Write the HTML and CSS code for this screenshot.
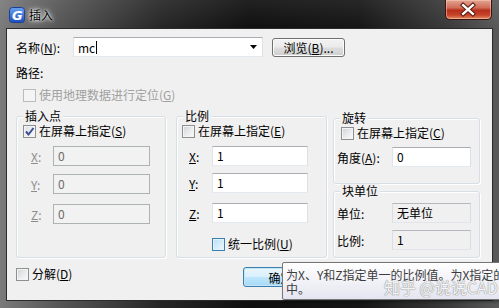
FILE: index.html
```html
<!DOCTYPE html>
<html lang="zh-CN">
  <head>
    <meta charset="UTF-8" />
    <title>插入</title>
    <link rel="stylesheet" href="styles.css">
  </head>
  <body>
    <div class="window">
      <div class="titlebar">
        <svg class="app-icon" viewBox="0 0 16 16">
          <defs>
            <linearGradient id="ig" x1="0" y1="0" x2="0" y2="1">
              <stop offset="0" stop-color="#6aa0f0" />
              <stop offset="1" stop-color="#1d4fc0" />
            </linearGradient>
          </defs>
          <rect x="0.5" y="0.5" width="15" height="15" rx="3" fill="url(#ig)" stroke="#1a3f95" />
          <text x="8.3" y="13" text-anchor="middle" class="icon-g">G</text>
        </svg>
        <span class="title">插入</span>
        <div class="close">
          <svg viewBox="0 0 47 20" width="47" height="20">
            <path d="M18.5 6 L28.5 15 M28.5 6 L18.5 15" stroke="#5a1a10" stroke-width="4.5" stroke-linecap="square" />
            <path d="M18.5 6 L28.5 15 M28.5 6 L18.5 15" stroke="#fff" stroke-width="2.4" stroke-linecap="square" />
          </svg>
        </div>
      </div>

      <div class="client">
        <div class="name-row">
          <span class="name-lbl">名称(<u>N</u>):</span>
          <div class="combo">
            <span>mc</span><span class="caret"></span>
            <svg class="drop" viewBox="0 0 7 4" width="7" height="4"><path d="M0 0 H7 L3.5 4 Z" fill="#000" /></svg>
          </div>
          <button class="btn browse">浏览(<u>B</u>)...</button>
        </div>

        <div class="path-lbl">路径:</div>
        <div class="check geo"><span class="box off"></span>使用地理数据进行定位(<u>G</u>)</div>

        <div class="groups">
          <div class="group insert">
            <div class="gtitle">插入点</div>
            <div class="check"><span class="box on">
              <svg viewBox="0 0 11 11" width="11" height="11"><path d="M2 5.5 L4.5 8.5 L9.5 2" fill="none" stroke="#3b4f91" stroke-width="2" /></svg>
            </span>在屏幕上指定(<u>S</u>)</div>
            <div class="field dim first"><span class="flbl"><u>X</u>:</span><div class="input off">0</div></div>
            <div class="field dim second"><span class="flbl"><u>Y</u>:</span><div class="input off">0</div></div>
            <div class="field dim third"><span class="flbl"><u>Z</u>:</span><div class="input off">0</div></div>
          </div>

          <div class="group scale">
            <div class="gtitle">比例</div>
            <div class="check"><span class="box"></span>在屏幕上指定(<u>E</u>)</div>
            <div class="field first"><span class="flbl"><u>X</u>:</span><div class="input">1</div></div>
            <div class="field second"><span class="flbl"><u>Y</u>:</span><div class="input">1</div></div>
            <div class="field third"><span class="flbl"><u>Z</u>:</span><div class="input">1</div></div>
            <div class="check uniform"><span class="box hot"></span>统一比例(<u>U</u>)</div>
          </div>

          <div class="col3">
            <div class="group rot">
              <div class="gtitle">旋转</div>
              <div class="check"><span class="box"></span>在屏幕上指定(<u>C</u>)</div>
              <div class="field"><span class="flbl">角度(<u>A</u>):</span><div class="input">0</div></div>
            </div>
            <div class="group unit">
              <div class="gtitle">块单位</div>
              <div class="field"><span class="flbl">单位:</span><div class="input ro">无单位</div></div>
              <div class="field"><span class="flbl">比例:</span><div class="input ro">1</div></div>
            </div>
          </div>
        </div>

        <div class="footer">
          <div class="check explode"><span class="box"></span>分解(<u>D</u>)</div>
          <div class="buttons">
            <button class="btn default">确定</button>
            <button class="btn">取消</button>
            <button class="btn">帮助(<u>H</u>)</button>
          </div>
        </div>
      </div>
    </div>

    <div class="tooltip">为X、Y和Z指定单一的比例值。为X指定的值也反映在Y和Z的值<br>中。</div>
    <div class="watermark">知乎 @说说CAD</div>
  </body>
</html>
```

FILE: styles.css
```css
* {
  margin: 0;
  padding: 0;
  box-sizing: border-box;
}

body {
  width: 499px;
  height: 308px;
  overflow: hidden;
  position: relative;
  background: #111;
  font-family: "Noto Sans CJK SC", "Liberation Sans", sans-serif;
  font-size: 12px;
  color: #000;
}

u {
  text-decoration: underline;
  text-underline-offset: 1px;
}

/* window frame */
.window {
  width: 499px;
  height: 308px;
  padding: 0 7px 8px;
  display: flex;
  flex-direction: column;
  background:
    linear-gradient(180deg, rgba(255, 255, 255, 0.08) 0, rgba(0, 0, 0, 0) 30px),
    linear-gradient(90deg, #7a7a7a 0%, #555 12%, #262626 32%, #0f0f0f 50%, #151515 72%, #3a3a3a 90%, #5a5a5a 100%);
}

.titlebar {
  height: 29px;
  display: flex;
  align-items: flex-start;
  flex-shrink: 0;
}

.app-icon {
  width: 16px;
  height: 16px;
  margin: 7px 0 0 2px;
}

.icon-g {
  font-family: "DejaVu Sans", sans-serif;
  font-weight: bold;
  font-style: italic;
  font-size: 13px;
  fill: #fff;
}

.title {
  margin: 7px 0 0 4px;
  line-height: 16px;
  color: #000;
  text-shadow: 0 0 4px #fff, 0 0 6px #ddd, 0 0 2px #fff;
}

.close {
  margin-left: auto;
  width: 47px;
  height: 20px;
  border: 1px solid #3a1410;
  border-top: none;
  border-radius: 0 0 5px 5px;
  background: linear-gradient(180deg, #e3a592 0%, #d06d57 40%, #b7301b 55%, #c8452b 80%, #e08d63 100%);
  box-shadow: inset 0 0 0 1px rgba(255, 210, 190, 0.5);
  display: flex;
}

.close svg {
  margin: -1px 0 0 -1px;
}

/* client area */
.client {
  flex: 1;
  background: #f0f0f0;
  padding: 8px 12px 0 9px;
  box-shadow: 0 0 0 1px #2b2b2b;
}

.name-row {
  display: flex;
  align-items: center;
  height: 20px;
}

.name-lbl {
  width: 57px;
}

.combo {
  width: 190px;
  height: 20px;
  display: flex;
  align-items: center;
  padding-left: 4px;
  background: #fff;
  border: 1px solid;
  border-color: #abadb3 #dbdfe6 #e3e9ef #e2e3ea;
}

.caret {
  width: 1px;
  height: 13px;
  margin-left: 1px;
  background: #000;
}

.drop {
  margin: 0 5px 0 auto;
}

.btn {
  font: inherit;
  color: #000;
  height: 20px;
  width: 75px;
  border: 1px solid #707070;
  border-radius: 3px;
  background: linear-gradient(180deg, #f2f2f2 0%, #ebebeb 48%, #dddddd 52%, #cfcfcf 100%);
  box-shadow: inset 0 0 0 1px #fcfcfc;
}

.browse {
  margin-left: 9px;
  width: 73px;
  height: 19px;
}

.default {
  border-color: #3c7fb1;
  background: linear-gradient(180deg, #eaf6fd 0%, #d9f0fc 48%, #bee6fd 52%, #a7d9f5 100%);
  box-shadow: inset 0 0 0 1px #c4e5f6;
}

.path-lbl {
  margin-top: 8px;
  line-height: 16px;
}

/* checkboxes */
.check {
  display: flex;
  align-items: center;
  height: 16px;
  line-height: 16px;
  white-space: nowrap;
}

.box {
  width: 13px;
  height: 13px;
  margin-right: 3px;
  flex-shrink: 0;
  border: 1px solid #8e8f8f;
  background: linear-gradient(135deg, #cfd2d7 0%, #eceef0 60%, #fafafa 100%);
  box-shadow: inset 0 0 0 1px #f4f4f4;
  display: flex;
  align-items: center;
  justify-content: center;
}

.box.off {
  border-color: #bcbcbc;
  background: #f4f4f4;
}

.box.on {
  background: linear-gradient(135deg, #dfe3e8 0%, #f6f7f8 100%);
}

.box.hot {
  border-color: #3c7fb1;
  background: linear-gradient(135deg, #b9def5 0%, #def1fb 70%, #eef8fd 100%);
  box-shadow: inset 0 0 0 1px #def3fd;
}

.geo {
  margin: 6px 0 0 7px;
  color: #a0a0a0;
}

/* group boxes */
.groups {
  display: flex;
  height: 142px;
  margin-top: 13px;
}

.group {
  border: 1px solid #d5dfe5;
  border-radius: 3px;
  box-shadow: inset 1px 1px 0 #fff, 1px 1px 0 #fff;
}

.gtitle {
  width: max-content;
  height: 14px;
  line-height: 14px;
  margin: -8px 0 0 6px;
  padding: 0 2px;
  background: #f0f0f0;
}

.field {
  display: flex;
  align-items: center;
}

.flbl {
  white-space: nowrap;
}

.input {
  height: 20px;
  padding-left: 4px;
  line-height: 18px;
  background: #fff;
  border: 1px solid;
  border-color: #abadb3 #dbdfe6 #e3e9ef #e2e3ea;
}

.input.off {
  background: #f2f2f2;
  color: #6d6d6d;
  border-color: #adb2b5;
}

.input.ro {
  background: #f0f0f0;
  border-color: #b5b9bd #dadde1 #e2e5e9 #dadde1;
}

.dim .flbl {
  color: #8d8d8d;
}

.insert {
  width: 150px;
  margin-right: 10px;
}

.insert .check {
  margin-left: 6px;
}

.insert .field {
  padding-left: 14px;
}

.insert .flbl {
  width: 22px;
}

.insert .input {
  width: 97px;
}

.insert .first { margin-top: 7px; }
.insert .second { margin-top: 8px; }
.insert .third { margin-top: 10px; }

.scale {
  width: 151px;
  margin-right: 6px;
}

.scale .check {
  margin-left: 5px;
}

.scale .field {
  padding-left: 12px;
}

.scale .flbl {
  width: 23px;
}

.scale .input {
  width: 96px;
}

.scale .first { margin-top: 7px; }
.scale .second { margin-top: 7px; }
.scale .third { margin-top: 10px; }

.scale .uniform {
  margin: 13px 0 0 35px;
}

.col3 {
  width: 147px;
  display: flex;
  flex-direction: column;
}

.rot {
  margin-top: 2px;
  padding-bottom: 16px;
}

.rot .check {
  margin-left: 7px;
}

.col3 .field {
  padding-left: 3px;
}

.col3 .flbl {
  width: 55px;
}

.col3 .input {
  width: 79px;
}

.rot .field {
  margin-top: 6px;
}

.unit {
  flex: 1;
  margin-top: 7px;
}

.unit .field {
  margin-top: 5px;
}

.unit .field + .field {
  margin-top: 7px;
}

/* footer */
.footer {
  display: flex;
  align-items: flex-start;
}

.explode {
  margin-top: 8px;
}

.buttons {
  display: flex;
  gap: 6px;
  margin: 9px 0 0 auto;
}

/* tooltip over the dialog */
.tooltip {
  position: absolute;
  left: 282px;
  top: 262px;
  width: 240px;
  height: 38px;
  padding: 5px 0 0 3px;
  line-height: 14px;
  white-space: nowrap;
  overflow: hidden;
  color: #3c3c3c;
  border: 1px solid #767676;
  border-radius: 2px;
  background: linear-gradient(180deg, #ffffff 0%, #e4e5f0 100%);
  box-shadow: 2px 2px 3px rgba(0, 0, 0, 0.35);
}

.watermark {
  position: absolute;
  left: 384px;
  top: 278px;
  font-size: 16px;
  line-height: 18px;
  white-space: nowrap;
  color: rgba(255, 255, 255, 0.92);
  text-shadow: 0 0 1px #8a8a8a, 0 0 1px #8a8a8a;
}
```
